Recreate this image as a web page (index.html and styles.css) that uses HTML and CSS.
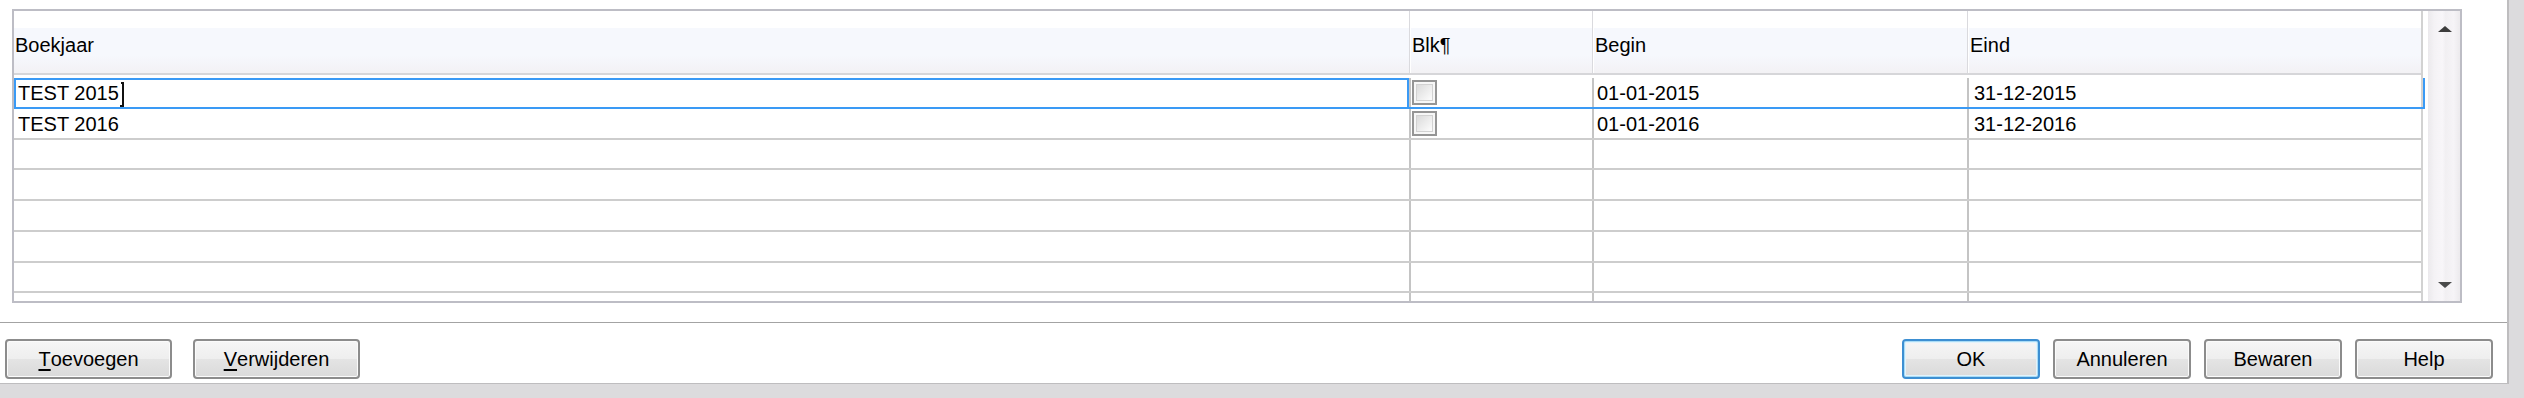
FILE: index.html
```html
<!DOCTYPE html>
<html lang="nl">
<head>
    <meta charset="UTF-8">
    <title>Boekjaren</title>
    <link rel="stylesheet" href="styles.css">
</head>
<body>
    <div class="dialog">
        <!-- Tabel met boekjaren -->
        <div class="grid">
            <div class="table">
                <div class="grid-header">
                    <div class="head-cell">Boekjaar</div>
                    <div class="head-cell">Blk¶</div>
                    <div class="head-cell">Begin</div>
                    <div class="head-cell">Eind</div>
                </div>
                <div class="grid-body">
                    <div class="row row-focus">
                        <div class="cell cell-edit">TEST 2015<span class="ibeam"></span></div>
                        <div class="cell cell-check"><span class="checkbox"></span></div>
                        <div class="cell cell-begin">01-01-2015</div>
                        <div class="cell cell-end">31-12-2015</div>
                    </div>
                    <div class="row">
                        <div class="cell">TEST 2016</div>
                        <div class="cell cell-check"><span class="checkbox"></span></div>
                        <div class="cell cell-begin">01-01-2016</div>
                        <div class="cell cell-end">31-12-2016</div>
                    </div>
                    <div class="row"><div class="cell"></div><div class="cell cell-check"></div><div class="cell cell-begin"></div><div class="cell cell-end"></div></div>
                    <div class="row"><div class="cell"></div><div class="cell cell-check"></div><div class="cell cell-begin"></div><div class="cell cell-end"></div></div>
                    <div class="row"><div class="cell"></div><div class="cell cell-check"></div><div class="cell cell-begin"></div><div class="cell cell-end"></div></div>
                    <div class="row"><div class="cell"></div><div class="cell cell-check"></div><div class="cell cell-begin"></div><div class="cell cell-end"></div></div>
                    <div class="row"><div class="cell"></div><div class="cell cell-check"></div><div class="cell cell-begin"></div><div class="cell cell-end"></div></div>
                    <div class="row"><div class="cell"></div><div class="cell cell-check"></div><div class="cell cell-begin"></div><div class="cell cell-end"></div></div>
                </div>
            </div>
            <div class="scrollbar">
                <span class="arrow-up"></span>
                <span class="arrow-down"></span>
            </div>
        </div>

        <div class="separator"></div>

        <!-- Knoppen -->
        <div class="buttons">
            <button class="btn btn-wide"><u>T</u>oevoegen</button>
            <button class="btn btn-wide"><u>V</u>erwijderen</button>
            <div class="spacer"></div>
            <button class="btn btn-default">OK</button>
            <button class="btn">Annuleren</button>
            <button class="btn">Bewaren</button>
            <button class="btn">Help</button>
        </div>
    </div>
</body>
</html>
```

FILE: styles.css
```css
body {
    font-family: 'Liberation Sans', Arial, sans-serif;
    font-size: 20px;
    color: #000;
    background-color: #dcdbdd;
    margin: 0;
    padding: 0;
}
.dialog {
    width: 2509px;
    height: 384px;
    box-sizing: border-box;
    background-color: #ffffff;
    border-right: 2px solid #bebdbf;
    border-bottom: 1px solid #bebdbf;
    display: flex;
    flex-direction: column;
}
.grid {
    flex: none;
    margin: 9px 0 0 12px;
    width: 2450px;
    height: 294px;
    box-sizing: border-box;
    border: 2px solid #bdbdc5;
    display: flex;
    overflow: hidden;
}
.table {
    width: 2409px;
    box-sizing: border-box;
    border-right: 2px solid #d2d2d2;
    display: flex;
    flex-direction: column;
}
.grid-header,
.row {
    display: grid;
    grid-template-columns: 1395px 183px 375px 454px;
}
.grid-header {
    flex: none;
    height: 64px;
    box-sizing: border-box;
    border-bottom: 2px solid #d6d6d9;
    background: linear-gradient(to bottom, #ffffff 0, #ffffff 17px, #f6f8fd 17px, #f6f8fd 44px, #f3f2f5 60px);
}
.head-cell {
    padding: 22px 0 0 1px;
    line-height: 24px;
    white-space: nowrap;
}
.head-cell + .head-cell {
    border-left: 1px solid #dadade;
    box-shadow: inset 1px 0 #ffffff;
    padding-left: 2px;
}
.grid-body {
    flex: 1;
    min-height: 0;
    padding-top: 3px;
    display: flex;
    flex-direction: column;
}
.row {
    flex: none;
    height: 30.75px;
    box-sizing: border-box;
    border-bottom: 2px solid #cdcdcd;
}
.row-focus {
    border-bottom-color: #3a9af5;
    border-right: 2px solid #3a9af5;
    margin-right: -4px;
}
.cell {
    padding: 3px 0 0 4px;
    line-height: 24px;
    white-space: nowrap;
    overflow: hidden;
}
.cell + .cell {
    border-left: 2px solid #c4c4c4;
}
.cell-edit {
    position: relative;
    border: 2px solid #3a9af5;
    border-bottom: none;
    padding: 1px 0 0 2px;
    overflow: visible;
}
.ibeam {
    position: absolute;
    left: 106px;
    top: 2px;
    width: 2px;
    height: 25px;
    background-color: #111;
}
.ibeam::before,
.ibeam::after {
    content: "";
    position: absolute;
    height: 2px;
    width: 3px;
    background-color: #111;
}
.ibeam::before {
    top: 0;
    left: -1px;
}
.ibeam::after {
    bottom: 0;
    left: -2px;
}
.cell-check {
    padding: 2px 0 0 1px;
}
.cell-begin {
    padding-left: 3px;
}
.cell-end {
    padding-left: 5px;
}
.checkbox {
    display: block;
    width: 25px;
    height: 25px;
    box-sizing: border-box;
    border: 2px solid #959595;
    background: linear-gradient(135deg, #d4d4d4, #fafafa 80%);
    box-shadow: inset 0 0 0 2px #f7f7f7, inset 0 0 0 3px #d2d2d2;
}
.scrollbar {
    margin-left: 5px;
    width: 32px;
    background: linear-gradient(to right, #ebe9ec, #f4f2f5 20%, #f8f6f9 45%, #f1eff2 55%, #f6f4f7 80%, #ecEaed);
    display: flex;
    flex-direction: column;
    justify-content: space-between;
    align-items: center;
    padding: 15px 0 13px 1px;
    box-sizing: border-box;
}
.arrow-up,
.arrow-down {
    width: 0;
    height: 0;
    border-left: 7px solid transparent;
    border-right: 7px solid transparent;
}
.arrow-up {
    border-bottom: 6px solid #3c3c3c;
}
.arrow-down {
    border-top: 6px solid #4a4a4a;
}
.separator {
    flex: none;
    margin-top: 19px;
    height: 1px;
    background-color: #a3a3a3;
}
.buttons {
    display: flex;
    padding: 16px 14px 0 5px;
    gap: 13px;
}
.spacer {
    flex: 1;
}
.btn {
    width: 138px;
    height: 40px;
    box-sizing: border-box;
    border: 2px solid #8c8c8c;
    border-radius: 4px;
    background: linear-gradient(to bottom, #f6f6f6, #eeeeee 50%, #e4e4e4 50%, #dadada);
    box-shadow: inset 0 0 0 1px #fbfbfb;
    font-family: 'Liberation Sans', Arial, sans-serif;
    font-size: 20px;
    line-height: 24px;
    color: #000;
    padding: 0;
    display: flex;
    align-items: center;
    justify-content: center;
}
.btn-wide {
    width: 167px;
}
.btn-wide + .btn-wide {
    margin-left: 8px;
}
.btn u {
    text-decoration-thickness: 2px;
    text-underline-offset: 3px;
}
.btn-default {
    border-color: #3d8fd2;
    box-shadow: inset 0 0 0 1px #a9dcf6, inset 0 0 0 2px #e2f3fc;
}
```
